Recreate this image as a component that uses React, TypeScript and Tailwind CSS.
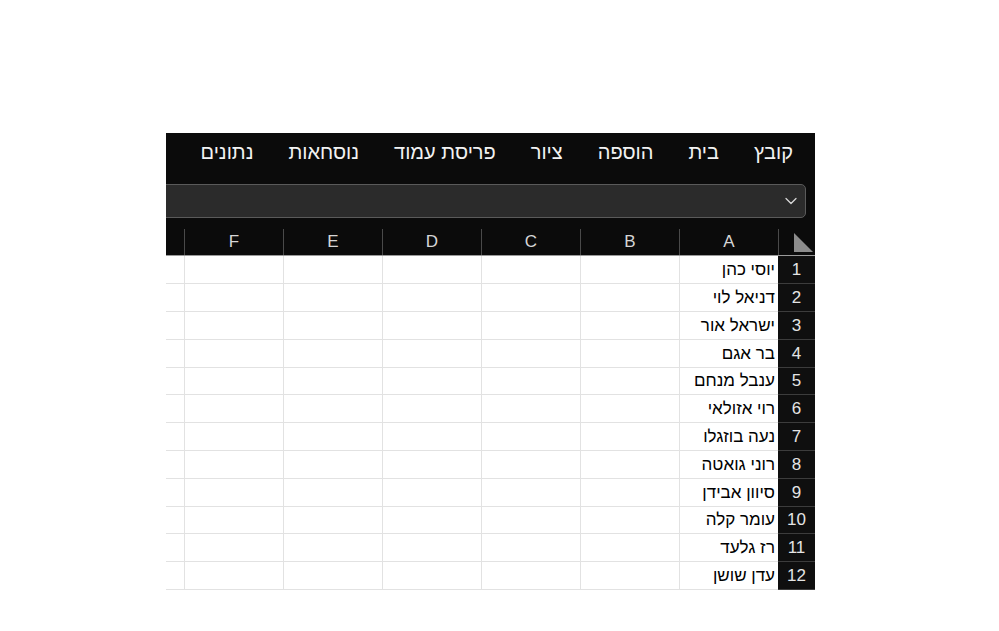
import React from 'react';
import { ChevronDown } from 'lucide-react';

const tabs = ['קובץ', 'בית', 'הוספה', 'ציור', 'פריסת עמוד', 'נוסחאות', 'נתונים', 'סקירה'];
const columns = ['A', 'B', 'C', 'D', 'E', 'F', 'G'];
const names = [
    'יוסי כהן',
    'דניאל לוי',
    'ישראל אור',
    'בר אגם',
    'ענבל מנחם',
    'רוי אזולאי',
    'נעה בוזגלו',
    'רוני גואטה',
    'סיוון אבידן',
    'עומר קלה',
    'רז גלעד',
    'עדן שושן',
];
// a couple of rows are a pixel shorter, as in the sheet
const rowHeights = ['h-[28px]', 'h-[28px]', 'h-[28px]', 'h-[28px]', 'h-[27px]', 'h-[28px]', 'h-[28px]', 'h-[28px]', 'h-[28px]', 'h-[27px]', 'h-[28px]', 'h-[28px]'];

const font = { fontFamily: '"Liberation Sans", "DejaVu Sans", Arial, sans-serif' };

export default function App() {
    return (
        <div className="min-h-screen bg-white" style={font}>
            <div className="pt-[133px] pl-[166px]">
                {/* visible part of the window */}
                <div dir="rtl" className="w-[649px] h-[457px] overflow-hidden">
                    <div className="w-[720px] bg-[#0b0b0b] flex flex-col">
                        {/* Ribbon tabs */}
                        <div className="h-[50px] flex items-center gap-[35px] pr-[22px] pb-[12px] whitespace-nowrap text-[20px] text-[#f2f2f2]">
                            {tabs.map((t) => (
                                <span key={t}>{t}</span>
                            ))}
                        </div>

                        {/* Formula bar */}
                        <div className="h-[34px] mt-px ms-[9px] rounded-[5px] border border-[#5a5a5a] bg-[#2b2b2b] flex items-center ps-[4px]">
                            <ChevronDown size={20} strokeWidth={1.5} className="text-[#d8d8d8]" />
                        </div>

                        {/* Column headers */}
                        <div className="mt-[11px] h-[27px] flex border-b border-[#9a9a9a]">
                            <div className="w-[37px] shrink-0 border-l border-[#4a4a4a] flex items-end pb-[3px] pr-[2px]">
                                <svg width="19" height="19" viewBox="0 0 19 19">
                                    <polygon points="0,0 0,19 19,19" fill="#8c8c8c" />
                                </svg>
                            </div>
                            {columns.map((c) => (
                                <div
                                    key={c}
                                    className="w-[99px] shrink-0 border-l border-[#4a4a4a] flex items-center justify-center text-[17px] text-[#d6d6d6]"
                                >
                                    {c === 'G' ? '' : c}
                                </div>
                            ))}
                        </div>

                        {/* Rows */}
                        <div className="flex flex-col bg-white">
                            {names.map((n, i) => (
                                <div key={n} className={`${rowHeights[i]} flex`}>
                                    <div className="w-[37px] shrink-0 bg-[#0f0f0f] border-b border-[#3c3c3c] flex items-center justify-center text-[17px] text-[#e4e4e4]">
                                        {i + 1}
                                    </div>
                                    {columns.map((c) => (
                                        <div
                                            key={c}
                                            className="w-[99px] shrink-0 border-l border-b border-[#e2e2e2] flex items-center pr-[3px] text-[17px] text-black whitespace-nowrap"
                                        >
                                            {c === 'A' ? n : ''}
                                        </div>
                                    ))}
                                </div>
                            ))}
                        </div>
                    </div>
                </div>
            </div>
        </div>
    );
}
